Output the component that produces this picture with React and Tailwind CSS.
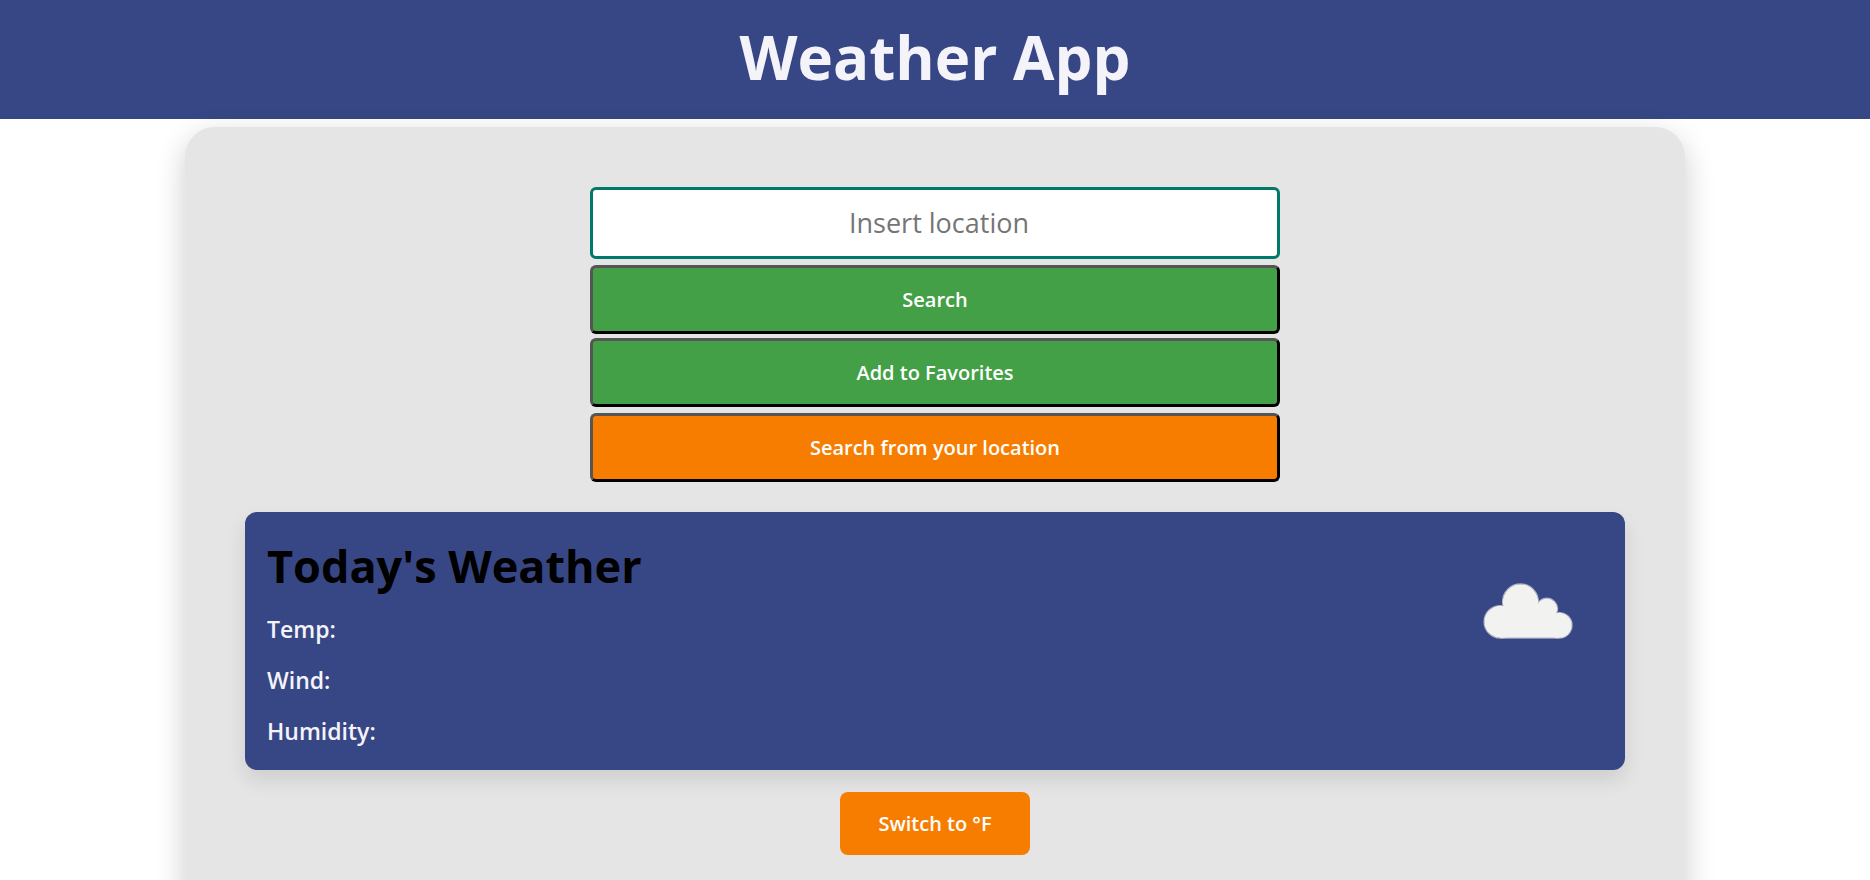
const panelButton =
  'w-full rounded-md border-[3px] border-t-[#555] border-l-[#555] border-r-black border-b-black py-[18px] text-xl leading-[27px] font-semibold text-white'

function Cloud() {
  return (
    <svg className="h-[57px] w-[90px]" viewBox="0 0 90 57" role="img" aria-label="Cloudy">
      <g stroke="#a5abc6" strokeWidth="1.2">
        <circle cx="17.3" cy="38.8" r="16.3" />
        <circle cx="37.5" cy="18.9" r="18" />
        <circle cx="63.8" cy="26" r="10.8" />
        <circle cx="76.3" cy="42.3" r="12.8" />
        <path d="M17.3 55.1 H76.3" />
      </g>
      <g fill="#f2f2f0">
        <circle cx="17.3" cy="38.8" r="16" />
        <circle cx="37.5" cy="18.9" r="17.7" />
        <circle cx="63.8" cy="26" r="10.5" />
        <circle cx="76.3" cy="42.3" r="12.5" />
        <path d="M17.3 54.8 V24 H38 L63.8 26 76.3 40 V54.8 Z" />
      </g>
    </svg>
  )
}

export default function App() {
  return (
    <div className="h-screen overflow-hidden bg-white font-['Open_Sans',sans-serif]">
      <div className="flex min-h-screen flex-col">
        <header className="bg-[#374785] pt-4 pb-[21px] text-center">
          <h1 className="text-[60px] leading-[82px] font-bold text-[#f5f3fa]">Weather App</h1>
        </header>
        <main className="mx-auto mt-2 flex w-full max-w-[1500px] grow flex-col items-center rounded-[30px] bg-[#e5e5e5] p-[60px] shadow-[0_10px_30px_rgba(0,0,0,0.2)]">
          <form className="flex w-1/2 flex-col" onSubmit={(e) => e.preventDefault()}>
            <input
              type="text"
              aria-label="Location"
              placeholder="Insert location"
              className="h-[72px] w-full rounded-md border-[3px] border-[#00796b] bg-white pb-0.5 pl-2 text-center text-[27px] placeholder:text-[#757575]"
            />
            <button type="submit" className={`${panelButton} mt-1.5 bg-[#43a047]`}>Search</button>
            <button type="button" className={`${panelButton} mt-1 bg-[#43a047]`}>Add to Favorites</button>
            <button type="button" className={`${panelButton} mt-1.5 bg-[#f77d00]`}>Search from your location</button>
          </form>
          <section className="mt-[30px] flex w-full justify-between rounded-xl bg-[#374785] pt-[23px] pr-[52px] pb-[13px] pl-[22px] shadow-[0_10px_20px_rgba(0,0,0,0.1)]">
            <div>
              <h2 className="text-[45px] leading-[61px] font-bold text-black">Today's Weather</h2>
              <div className="mt-2 text-[23px] leading-[51px] font-semibold text-[#f5f3fa]">
                <p>Temp:</p>
                <p>Wind:</p>
                <p>Humidity:</p>
              </div>
            </div>
            <div className="pt-12">
              <Cloud />
            </div>
          </section>
          <button type="button" className="mt-[22px] rounded-lg bg-[#f77d00] px-[38px] py-[18px] text-xl leading-[27px] font-semibold text-white">
            Switch to °F
          </button>
        </main>
      </div>
    </div>
  )
}
